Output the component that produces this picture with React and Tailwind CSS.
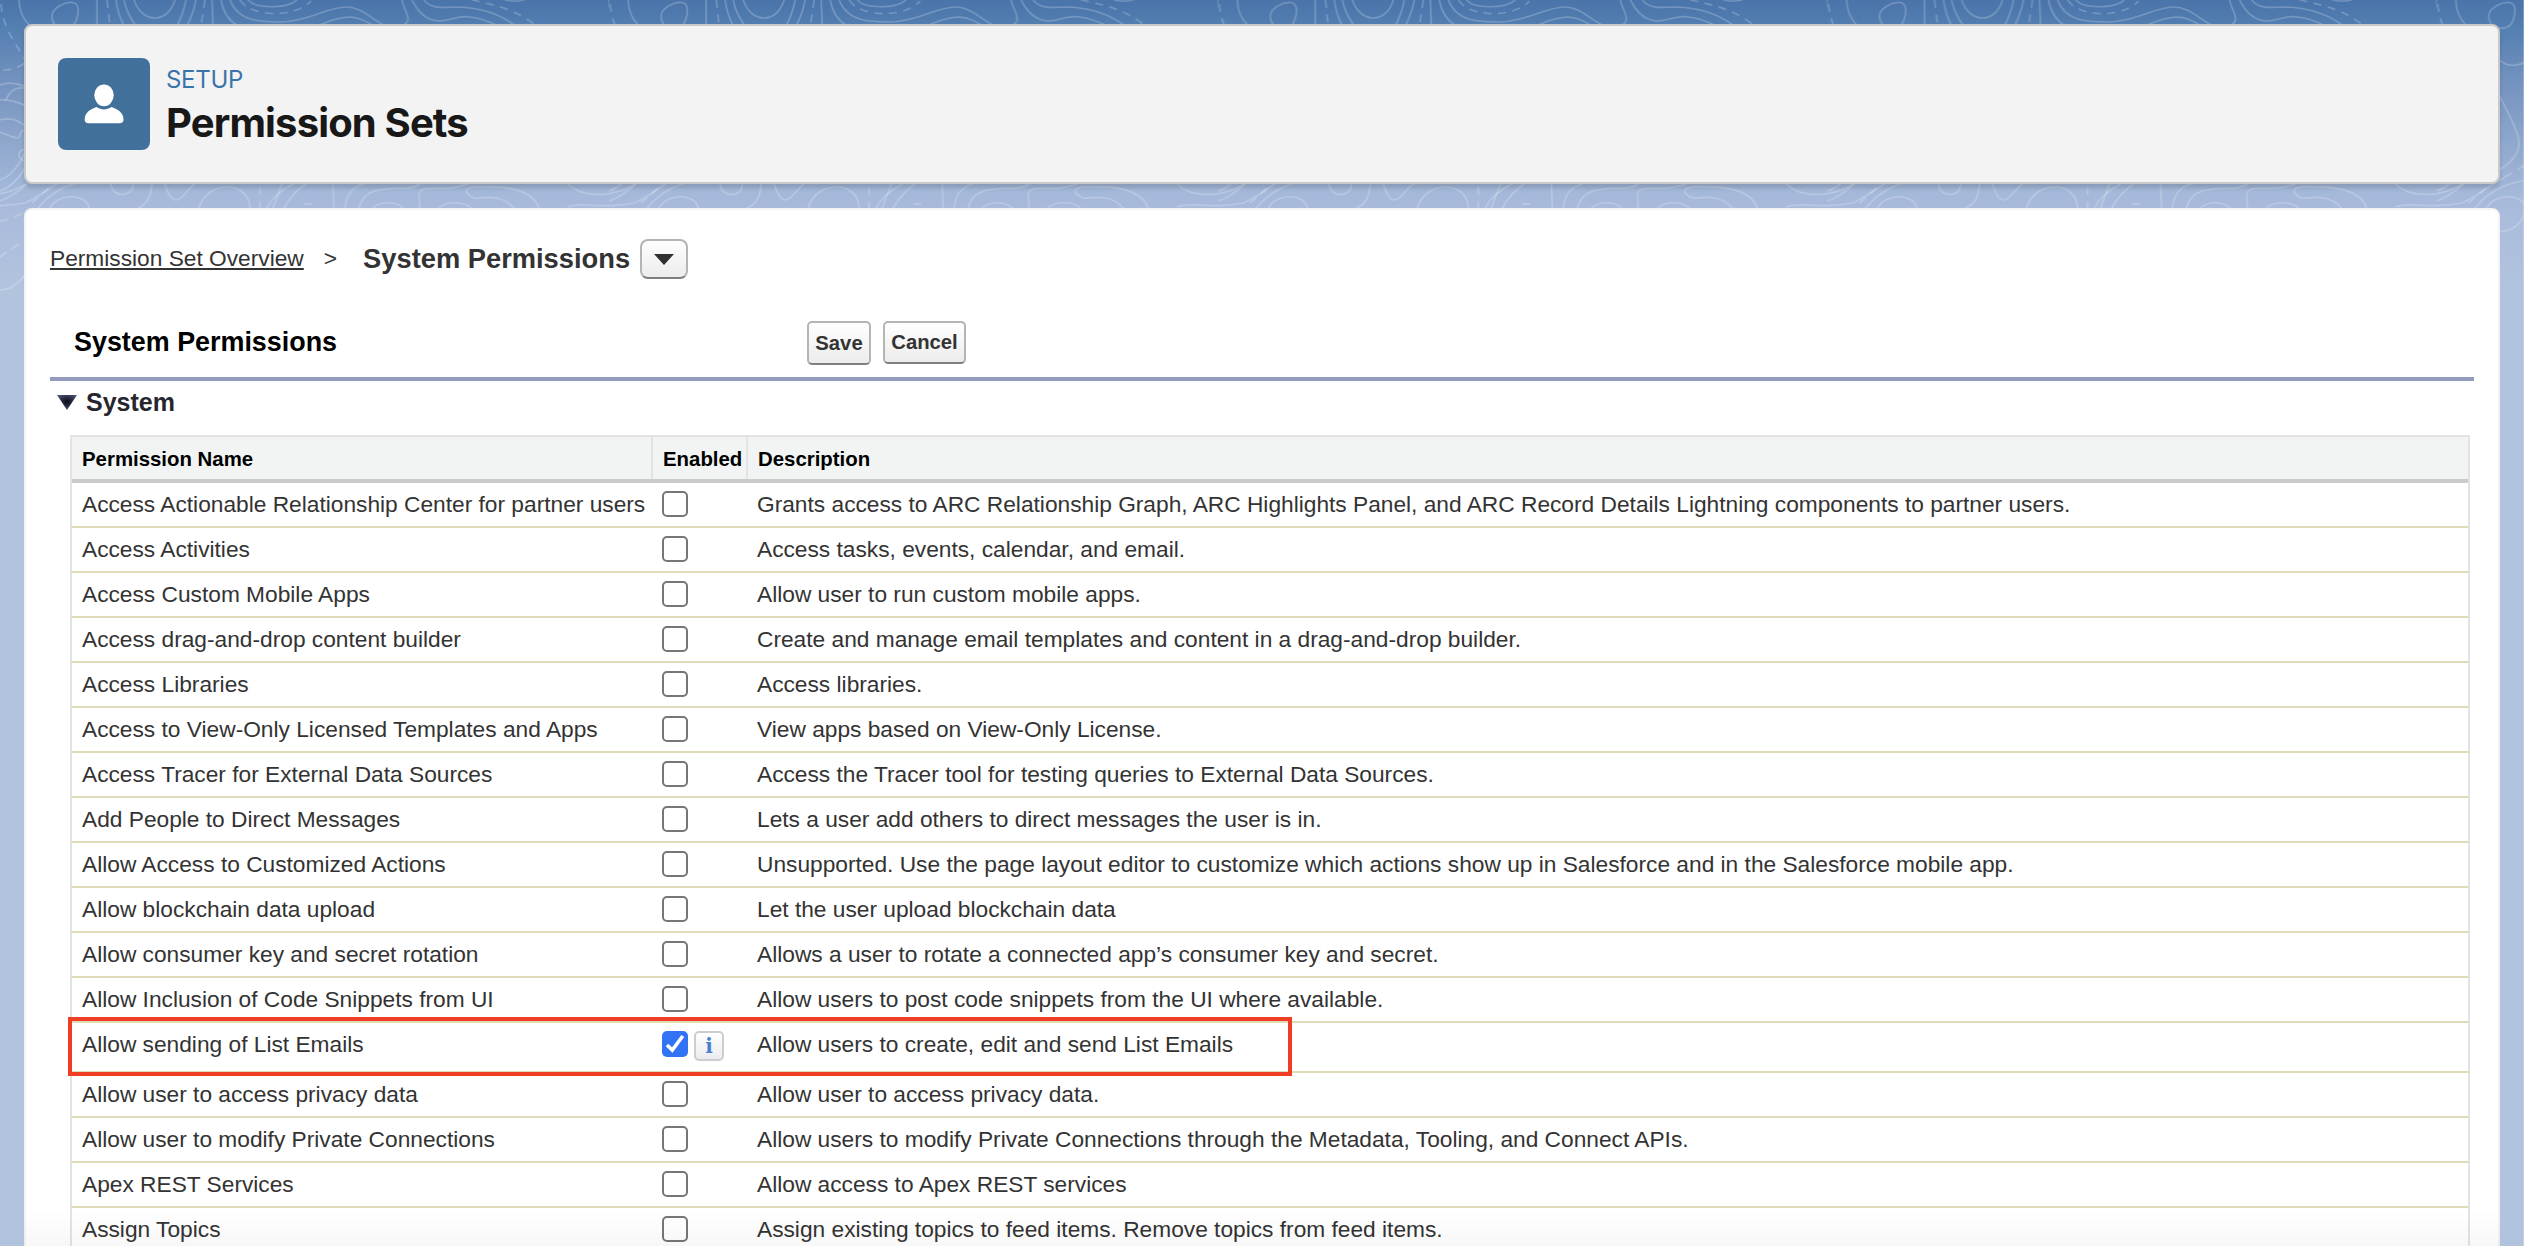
import React from "react";

const ROWS = [
  ["Access Actionable Relationship Center for partner users", "Grants access to ARC Relationship Graph, ARC Highlights Panel, and ARC Record Details Lightning components to partner users."],
  ["Access Activities", "Access tasks, events, calendar, and email."],
  ["Access Custom Mobile Apps", "Allow user to run custom mobile apps."],
  ["Access drag-and-drop content builder", "Create and manage email templates and content in a drag-and-drop builder."],
  ["Access Libraries", "Access libraries."],
  ["Access to View-Only Licensed Templates and Apps", "View apps based on View-Only License."],
  ["Access Tracer for External Data Sources", "Access the Tracer tool for testing queries to External Data Sources."],
  ["Add People to Direct Messages", "Lets a user add others to direct messages the user is in."],
  ["Allow Access to Customized Actions", "Unsupported. Use the page layout editor to customize which actions show up in Salesforce and in the Salesforce mobile app."],
  ["Allow blockchain data upload", "Let the user upload blockchain data"],
  ["Allow consumer key and secret rotation", "Allows a user to rotate a connected app’s consumer key and secret."],
  ["Allow Inclusion of Code Snippets from UI", "Allow users to post code snippets from the UI where available."],
  ["Allow sending of List Emails", "Allow users to create, edit and send List Emails", true],
  ["Allow user to access privacy data", "Allow user to access privacy data."],
  ["Allow user to modify Private Connections", "Allow users to modify Private Connections through the Metadata, Tooling, and Connect APIs."],
  ["Apex REST Services", "Allow access to Apex REST services"],
  ["Assign Topics", "Assign existing topics to feed items. Remove topics from feed items."],
];

const CONTOURS = [
  "M19 0C19 10 22 18 30 26",
  "M52 15C53 8 64 2 72 2.500C80 3 79 13 76 21C72 32 51 31 52 15Z",
  "M97 0V26",
  "M116 0C117 10 120 18 124 26",
  "M124 0C126 10 130 18 136 26",
  "M134 0C142 24 168 24 175 0",
  "M186 0C184 10 181 18 177 26",
  "M196 0C194 10 191 18 187 26",
  "M212 0L213 26",
  "M221 0C223 12 228 20 238 26",
  "M230 0C238 22 262 22 280 22C306 22 328 7 346 7C362 7 372 20 386 26",
  "M248 0C256 9 286 9 297 0",
  "M318 26C334 18 350 15 360 19C366 21 370 24 374 26",
  "M402 0C403 8 408 12 408 19C408 22 406 24 402 26",
  "M412 0C418 12 426 20 438 21C450 21 458 15 470 17C480 18 490 22 498 26",
  "M424 0C430 8 440 8 455 7C480 7 500 14 516 26",
  "M505 0C512 1.500 518 1.500 524 0",
  "M111 184C111 198 134 198 133 184",
  "M152 184C151 196 148 204 138 208",
  "M165 184C168 194 172 200 176 200C183 200 188 188 195 184",
  "M199 208C207 180 249 180 250 208",
  "M267 208C272 197 282 190 293 184",
  "M273 208L282 184",
  "M284 208C290 198 296 190 306 184",
  "M333 184L334 208",
  "M345 208C346 196 352 187 364 184",
  "M359 208C364 186 388 189 408 188C415 187 417 186 420 184",
  "M420 208L419 196C419 186 430 189 450 188C460 187 463 185 468 184",
  "M373 208C380 201 396 201 403 208",
  "M439 208C446 201 464 201 471 208",
  "M514 208C500 192 480 199 474 198C462 193 463 185 486 187C520 186 535 196 539 208",
  "M568 184C582 198 612 198 635 184",
  "M-41 184C-27 198 3 198 26 184",
  "M568 207C584 201 600 210 634 203C655 194 664 172 690 166",
  "M-41 207C-25 201 -9 210 25 203C46 194 52 184 68 178",
  "M38 208C50 194 64 184 90 180",
  "M50 208C58 193 86 193 89 208",
  "M63 60C70 67 82 67 92 60",
  "M62 94C74 120 90 142 78 156C73 163 68 167 63 169",
  "M63 231C76 232 88 222 88 208",
  "M0 85C8 82 16 83 24 86",
  "M6 100C9 92 15 87 24 88",
  "M0 100C10 99 18 102 26 106",
  "M0 120C10 117 19 120 26 127",
  "M0 132C8 134 10 138 18 138C22 136 18 130 26 130",
  "M26 150C17 149 16 160 26 161",
  "M0 180C12 176 20 164 26 150",
  "M0 191C12 187 20 177 26 166",
  "M0 201C12 197 20 190 27 184",
  "M0 290C12 290 20 282 26 273",
];
const DASHES = [
  "M1 4C3 30 16 42 27 64",
  "M3 70C12 70 18 68 26 62",
  "M107 0L110 26",
  "M205 0L201 26",
  "M240 0C252 18 296 18 311 1",
  "M472 0C492 4 518 10 536 26",
  "M609 0L611 22",
  "M260 187V208",
  "M304 204H314",
  "M32 203L52 185",
  "M68 177L90 164",
  "M0 221C8 220 14 218 24 212",
  "M0 257C6 252 14 248 24 240",
];

function Contours() {
  return (
    <svg className="absolute inset-x-0 top-0 h-[310px] w-full" aria-hidden="true">
      <defs>
        <pattern id="topo" width="609.2" height="310" patternUnits="userSpaceOnUse">
          <g fill="none" stroke="#fff" strokeOpacity=".21" strokeWidth="1.7">
            {CONTOURS.map((d) => <path key={d} d={d} />)}
            <g strokeDasharray="8 6.500">{DASHES.map((d) => <path key={d} d={d} />)}</g>
          </g>
        </pattern>
      </defs>
      <rect width="100%" height="310" fill="url(#topo)" />
    </svg>
  );
}

function Checkbox({ checked }) {
  if (!checked) return <span className="block size-[26px] rounded-[5px] border-2 border-[#767676] bg-white" />;
  return (
    <span className="block size-[26px] rounded-[5px] bg-[#3273f6]">
      <svg viewBox="0 0 26 26" className="size-full" fill="none" stroke="#fff" strokeWidth="3.6">
        <path d="M5 14L10.300 19L20.800 5" />
      </svg>
    </span>
  );
}

function InfoButton() {
  return (
    <span className="ml-1.5 flex size-[30px] items-center justify-center rounded-[5px] border-2 border-[#cdcdcd] bg-linear-to-b from-white to-[#ececf0] font-['DejaVu_Serif',serif] text-[20px] leading-none font-bold text-[#4a80cf]">
      i
    </span>
  );
}

const BUTTON = "border-2 border-[#b5b5b5] border-b-[#7f7f7f] bg-linear-to-b from-white to-[#ececec]";

export default function App() {
  return (
    <div className="relative h-[1246px] overflow-hidden bg-[#b2c3de] bg-[linear-gradient(to_bottom,#4a74aa_0px,#5480b2_30px,#7090bd_75px,#89a3ca_130px,#a3b8d9_190px,#abbbdc_215px,#b2c3de_290px)] px-6 pt-6 font-['Liberation_Sans',Arial,sans-serif] text-[22.72px] text-[#333]">
      <Contours />

      <header className="relative flex h-[160px] items-start rounded-lg border-2 border-[#c9c9c9] bg-[#f3f3f3] px-8 pt-8 shadow-[0_4px_4px_rgba(0,0,0,0.14)]">
        <div className="size-[92px] shrink-0 rounded-lg bg-[#41719b]">
          <svg viewBox="0 0 92 92" className="size-full" fill="#fff">
            <ellipse cx="46" cy="37.300" rx="9.700" ry="10.900" />
            <path d="M38.500 49C43 52.300 49 52.300 53.500 49C60 51.500 65.500 54.500 65.500 61.500C65.500 64 64 65.200 61.500 65.200H30.500C28 65.200 26.700 64 26.700 61.500C26.700 54.500 32 51.500 38.500 49Z" />
          </svg>
        </div>
        <div className="ml-4 pt-[5px] font-['Inter',sans-serif]">
          <p className="pt-px text-[24px] leading-[31px] tracking-[-0.3px] text-[#3a74aa]">SETUP</p>
          <h1 className="text-[40px] leading-[56px] font-bold tracking-[-0.85px] text-[#181818]">Permission Sets</h1>
        </div>
      </header>

      <main className="relative mt-6 h-[1100px] rounded-t-lg border-2 border-[#f3f3f3] bg-white px-6 pt-[29px]">
        <nav className="flex h-10 items-center">
          <a className="pb-0.5 leading-[38px] underline decoration-2 underline-offset-[2px]">Permission Set Overview</a>
          <span className="ml-[20px] pb-0.5 leading-[38px]">&gt;</span>
          <strong className="ml-[26px] text-[27.3px] leading-[38px]">System Permissions</strong>
          <span className={"ml-2.5 flex h-10 w-12 items-center justify-center rounded-[8px] " + BUTTON}>
            <svg width="20" height="11" viewBox="0 0 20 11" fill="#2f3132"><path d="M0 0H20L10 11Z" /></svg>
          </span>
        </nav>

        <div className="mt-[42px] flex h-[60px] items-start border-b-4 border-[#949cbe]">
          <h2 className="w-[757px] pl-6 text-[26.9px] leading-[43px] font-bold text-black">System Permissions</h2>
          <button className={"h-[44px] w-16 rounded-[5px] text-[20.3px] font-bold " + BUTTON}>Save</button>
          <button className={"ml-3 h-[43px] w-[83px] rounded-[5px] text-[20.3px] font-bold " + BUTTON}>Cancel</button>
        </div>

        <div className="flex h-[54px] items-start pl-[7px]">
          <svg width="20" height="15" viewBox="0 0 20 15" className="mt-[14px]">
            <defs>
              <radialGradient id="tri" cx=".5" cy=".45" r=".6">
                <stop offset="0" stopColor="#0b0b14" />
                <stop offset="1" stopColor="#4e5478" />
              </radialGradient>
            </defs>
            <path d="M0 0H20L10 15Z" fill="url(#tri)" />
          </svg>
          <h3 className="ml-[9px] text-[25px] leading-[42px] font-bold text-[#26262e]">System</h3>
        </div>

        <section className="ml-5 mr-1 border-x-2 border-t-2 border-[#e2e4e3]">
          <div className="flex h-[46px] border-b-4 border-[#cbcbcb] bg-[#f1f4f3] text-[20.4px] leading-[44px] font-bold text-black">
            <div className="w-[581px] border-r-2 border-[#e2e4e3] pl-[10px]">Permission Name</div>
            <div className="w-[95px] border-r-2 border-[#e2e4e3] pl-[10px]">Enabled</div>
            <div className="pl-[10px]">Description</div>
          </div>
          {ROWS.map(([name, description, checked]) => (
            <div key={name} className={"-mx-0.5 flex border-x-2 border-b-2 border-x-[#e2e4e3] border-b-[#e1dcb8] leading-[43px] whitespace-nowrap " + (checked ? "h-[50px]" : "h-[45px]")}>
              <div className="w-[590px] pl-[10px]">{name}</div>
              <div className="flex w-[95px] pt-2">
                <Checkbox checked={checked} />
                {checked && <InfoButton />}
              </div>
              <div>{description}</div>
            </div>
          ))}
        </section>
      </main>

      <div className="absolute top-[1017px] left-[68px] h-[59px] w-[1224px] border-4 border-[#f03e25]" />
      <div className="absolute inset-x-6 bottom-0 h-9 bg-linear-to-b from-transparent to-black/3" />
      <div className="absolute inset-y-0 right-0 w-px bg-white/25" />
    </div>
  );
}
